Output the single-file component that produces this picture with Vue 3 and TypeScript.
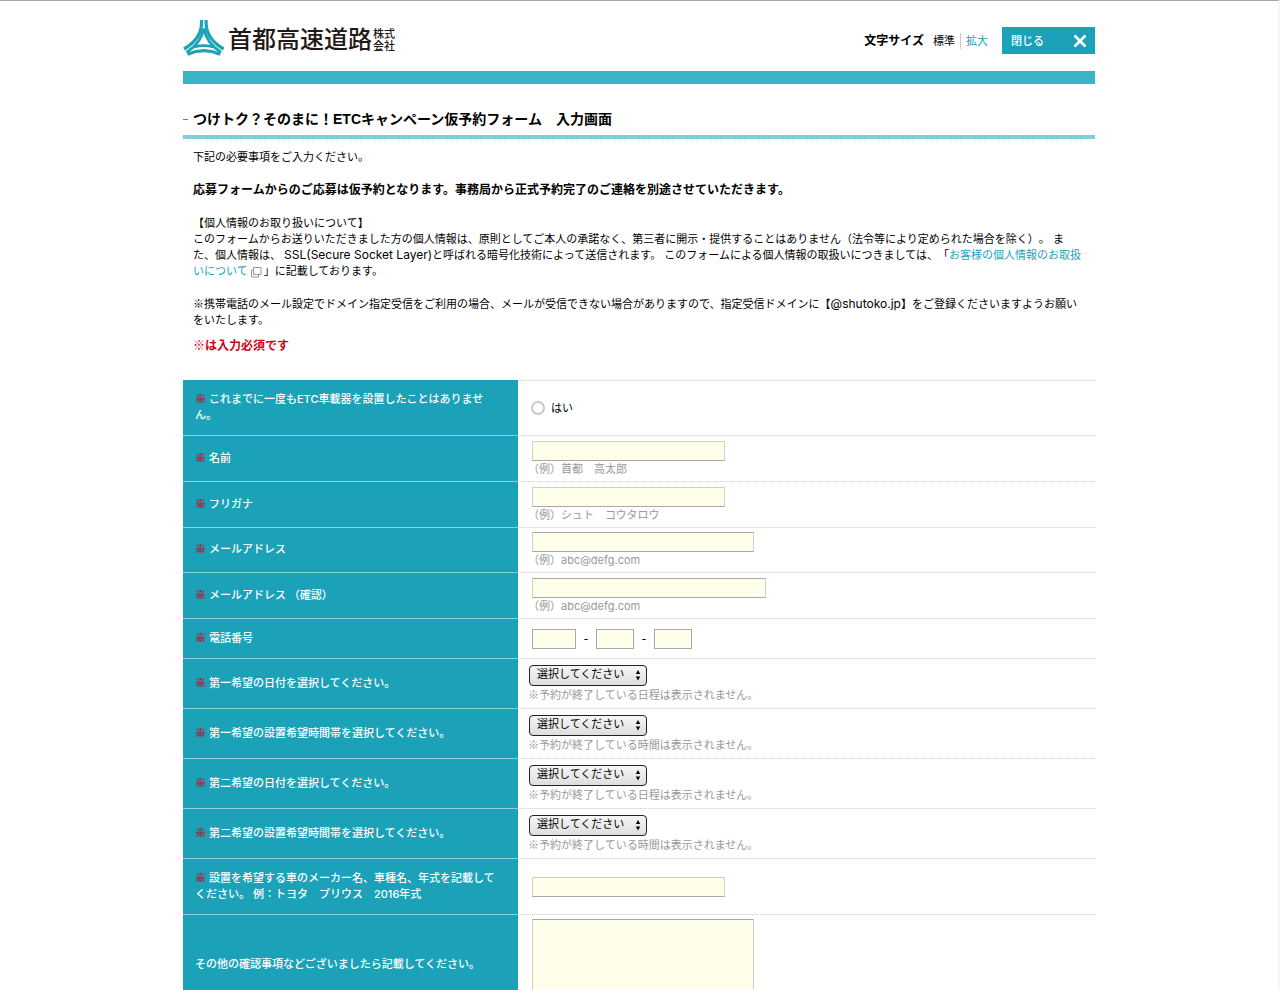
<script setup lang="ts">
interface Row {
  id: string
  label: string
  size: 'choice' | 'text' | 'mail' | 'phone' | 'pick' | 'car' | 'memo'
  required: boolean
  field?: 'name' | 'confirm'
  note?: string
}

const dateNote = '予約が終了している日程は表示されません。'
const timeNote = '予約が終了している時間は表示されません。'

const rows: Row[] = [
  { id: 'first', label: 'これまでに一度もETC車載器を設置したことはありません。', size: 'choice', required: true },
  { id: 'name', label: '名前', size: 'text', required: true, field: 'name', note: '（例）首都　高太郎' },
  { id: 'kana', label: 'フリガナ', size: 'text', required: true, field: 'name', note: '（例）シュト　コウタロウ' },
  { id: 'mail', label: 'メールアドレス', size: 'mail', required: true, note: '（例）abc@defg.com' },
  { id: 'mail2', label: 'メールアドレス （確認）', size: 'text', required: true, field: 'confirm', note: '（例）abc@defg.com' },
  { id: 'phone', label: '電話番号', size: 'phone', required: true },
  { id: 'date1', label: '第一希望の日付を選択してください。', size: 'pick', required: true, note: dateNote },
  { id: 'time1', label: '第一希望の設置希望時間帯を選択してください。', size: 'pick', required: true, note: timeNote },
  { id: 'date2', label: '第二希望の日付を選択してください。', size: 'pick', required: true, note: dateNote },
  { id: 'time2', label: '第二希望の設置希望時間帯を選択してください。', size: 'pick', required: true, note: timeNote },
  { id: 'car', label: '設置を希望する車のメーカー名、車種名、年式を記載してください。 例：トヨタ　プリウス　2016年式', size: 'car', required: true, field: 'name' },
  { id: 'memo', label: 'その他の確認事項などございましたら記載してください。', size: 'memo', required: false },
]
</script>

<template>
  <div class="page">
    <div class="container">
      <header class="header">
        <div class="logo">
          <svg class="mark" viewBox="0 0 42 36" width="42" height="36" aria-hidden="true">
            <g fill="none" stroke="#1ba3b8">
              <g stroke-width="3.200">
                <path d="M18.500 0V3C18.500 14 12 22.500 1 29" />
                <path d="M23.100 0V3C23.100 14 29.600 22.500 40.600 29" />
                <path d="M4.500 34.200C15 29.600 26.600 29.600 37.100 34.200" />
              </g>
              <g stroke-width="2.800">
                <path d="M20.800 8.500C19 18 13.500 26 3.500 32.500" />
                <path d="M20.800 8.500C22.600 18 28.100 26 38.100 32.500" />
                <path d="M11.500 26.800C17.500 25.400 24.100 25.400 30.100 26.800" />
              </g>
            </g>
          </svg>
          <span class="logo-name">首都高速道路</span>
          <span class="logo-sub">株式<br>会社</span>
        </div>
        <div class="tools">
          <strong class="size-title">文字サイズ</strong>
          <button type="button" class="size-button">標準</button>
          <button type="button" class="size-button large">拡大</button>
          <button type="button" class="close">
            閉じる
            <svg viewBox="0 0 14 14" width="14" height="14" aria-hidden="true">
              <path d="M1.500 1.500L12.500 12.500M12.500 1.500L1.500 12.500" stroke="#fff" stroke-width="2.600" />
            </svg>
          </button>
        </div>
      </header>
      <div class="band"></div>

      <h1 class="title"><span class="dash"></span>つけトク？そのまに！ETCキャンペーン仮予約フォーム　入力画面</h1>
      <div class="rule"></div>

      <div class="intro">
        <p>下記の必要事項をご入力ください。</p>
        <p class="strong">応募フォームからのご応募は仮予約となります。事務局から正式予約完了のご連絡を別途させていただきます。</p>
        <p>
          【個人情報のお取り扱いについて】<br>
          このフォームからお送りいただきました方の個人情報は、原則としてご本人の承諾なく、第三者に開示・提供することはありません（法令等により定められた場合を除く）。 ま<br>た、個人情報は、 <span class="latin">SSL(Secure Socket Layer)</span>と呼ばれる暗号化技術によって送信されます。 このフォームによる個人情報の取扱いにつきましては、「<a href="#">お客様の個人情報のお取扱<br>いについて<svg class="popup" viewBox="0 0 12 12" width="12" height="12" aria-hidden="true"><path d="M3.500 1.500H11V8.500H3.500ZM3.500 4H1.500V11H8.500V8.500" fill="none" stroke="#999" /></svg></a>」に記載しております。
        </p>
        <p>
          <span class="kome">※</span>携帯電話のメール設定でドメイン指定受信をご利用の場合、メールが受信できない場合がありますので、指定受信ドメインに【<span class="latin">@shutoko.jp</span>】をご登録くださいますようお願い<br>をいたします。
        </p>
        <p class="strong must">※は入力必須です</p>
      </div>

      <form @submit.prevent>
        <table class="form">
          <tbody>
            <tr v-for="row in rows" :key="row.id" :class="row.size">
              <th scope="row">
                <label :for="row.id"><template v-if="row.required"><span class="kome required">※</span>&nbsp;</template>{{ row.label }}</label>
              </th>
              <td>
                <div v-if="row.size === 'choice'" class="radio">
                  <input :id="row.id" type="radio" name="first">
                  <label :for="row.id">はい</label>
                </div>
                <div v-else-if="row.size === 'phone'" class="numbers">
                  <input :id="row.id" class="box area" type="tel" aria-label="市外局番">
                  <span>-</span>
                  <input class="box part" type="tel" aria-label="市内局番">
                  <span>-</span>
                  <input class="box part" type="tel" aria-label="加入者番号">
                </div>
                <div v-else-if="row.size === 'pick'" class="picker">
                  <select :id="row.id"><option>選択してください</option></select>
                  <svg viewBox="0 0 6 12" width="6" height="12" aria-hidden="true">
                    <path d="M3 1L5.200 5H0.800ZM3 11.500L5.200 7.500H0.800Z" fill="#000" />
                  </svg>
                </div>
                <textarea v-else-if="row.size === 'memo'" :id="row.id" class="box memo-box"></textarea>
                <input v-else :id="row.id" class="box" :class="row.field" type="text">
                <p v-if="row.note" class="note"><span v-if="row.size === 'pick'" class="kome">※</span>{{ row.note }}</p>
              </td>
            </tr>
          </tbody>
        </table>
      </form>
    </div>
  </div>
</template>

<style>
html,
body {
  margin: 0;
  background: #fff;
}
</style>

<style scoped>
.page {
  box-sizing: border-box;
  border-top: 1px solid #a5a5a5;
  border-right: 2px solid #f6f6f6;
  color: #000;
  font: 11px/16px Inter, "Noto Sans CJK JP", sans-serif;
  text-spacing-trim: space-all;
}
.container {
  max-width: 912px;
  margin: 0 auto;
}
.header {
  display: flex;
  justify-content: space-between;
  align-items: flex-start;
  height: 70px;
}
.logo {
  display: flex;
  align-items: flex-start;
  padding-top: 19px;
  color: #231815;
  font-family: "Noto Sans CJK JP", sans-serif;
}
.logo-name {
  margin-left: 3px;
  font-size: 24px;
  line-height: 36px;
  font-weight: 500;
}
.logo-sub {
  margin: 7px 0 0 1px;
  font-size: 11px;
  line-height: 12px;
  font-weight: 500;
}
.tools {
  display: flex;
  align-items: center;
  padding-top: 26px;
}
.size-title {
  margin-right: 4px;
  font-size: 12px;
}
.size-button {
  padding: 0 5px;
  border: 0;
  background: none;
  color: #000;
  font: inherit;
}
.size-button.large {
  margin-right: 9px;
  border-left: 1px solid #ccc;
  color: #1ba3b8;
}
.close {
  display: flex;
  justify-content: space-between;
  align-items: center;
  width: 93px;
  height: 27px;
  padding: 0 8px 0 9px;
  border: 0;
  background: #1ba1b8;
  color: #fff;
  font: inherit;
  font-weight: 500;
}
.band {
  height: 13px;
  background: #3cb3c5;
}
.title {
  display: flex;
  align-items: center;
  gap: 5px;
  margin: 24px 0 5px;
  font-family: "Liberation Sans", "Noto Sans CJK JP", sans-serif;
  font-size: 14px;
  line-height: 22px;
  font-weight: 700;
}
.dash {
  width: 5px;
  height: 1px;
  background: #777;
}
.rule {
  height: 4px;
  background: repeating-linear-gradient(90deg, #6fc6d3 0 1px, #8ad1db 1px 3px);
}
.intro {
  padding: 10px 0 27px 10px;
  white-space: nowrap;
}
.intro p {
  margin: 0 0 17px;
}
.intro .strong {
  font-size: 12px;
  font-weight: 700;
}
.intro .must {
  margin: -8px 0 0;
  color: #d0021b;
  font-family: "Noto Sans CJK JP", sans-serif;
}
.latin {
  font-size: 12px;
  line-height: 1;
}
a {
  color: #1ba3b8;
  text-decoration: none;
}
.popup {
  margin: 0 2px;
  vertical-align: -3px;
}
.kome {
  font-family: "Noto Sans CJK JP", sans-serif;
  line-height: 1;
}
.form {
  width: 100%;
  border-collapse: collapse;
  table-layout: fixed;
}
th,
td {
  box-sizing: border-box;
  padding: 0 10px;
  vertical-align: middle;
  text-align: left;
}
th {
  width: 335px;
  padding: 0 20px 2px 12px;
  border-top: 1px solid #8fd0db;
  background: #1ba1b8;
  color: #fff;
  font-weight: 500;
}
tr:first-child th {
  border-top-color: #1ba1b8;
}
td {
  border-top: 1px dotted #ccc;
}
.required {
  color: #d0021b;
  font-weight: 700;
  text-shadow: 0 0 1px #d0021b;
}
.choice {
  height: 55px;
}
.text {
  height: 46px;
}
.mail {
  height: 45px;
}
.phone {
  height: 40px;
}
.pick {
  height: 50px;
}
.car {
  height: 56px;
}
.memo {
  height: 100px;
}
.radio {
  display: flex;
  align-items: center;
  gap: 6px;
}
.radio input {
  appearance: none;
  width: 14px;
  height: 14px;
  margin: 0 0 0 3px;
  border: 2px solid #c8c8c8;
  border-radius: 50%;
  background: #fff;
}
.box {
  box-sizing: border-box;
  display: block;
  height: 20px;
  margin: 0 0 0 4px;
  padding: 1px 3px;
  border: 1px solid #d0d0c4;
  border-bottom-color: #aaaaa4;
  border-radius: 0;
  background: #fffeea;
  font: inherit;
}
.name {
  width: 193px;
}
.mail .box {
  width: 222px;
}
.confirm {
  width: 234px;
}
.mail .box,
.confirm {
  border-color: #aaaaa4 #d0d0c4;
}
.numbers {
  display: flex;
  align-items: center;
}
.numbers .box {
  border-color: #aaaaa4;
}
.numbers span {
  width: 16px;
  padding-left: 4px;
  box-sizing: border-box;
  text-align: center;
}
.area {
  width: 44px;
}
.part {
  width: 38px;
}
.memo .memo-box {
  width: 222px;
  height: 91px;
  border-color: #aaaaa4 #d0d0c4;
  resize: none;
}
.picker {
  display: grid;
  align-items: center;
  width: 118px;
  margin-left: 1px;
}
.picker > * {
  grid-area: 1 / 1;
}
.picker svg {
  justify-self: end;
  margin-right: 6px;
  pointer-events: none;
}
select {
  appearance: none;
  box-sizing: border-box;
  width: 100%;
  height: 21px;
  margin: 0;
  padding: 0 7px 2px;
  border: 1px solid #222;
  border-radius: 4px;
  background: linear-gradient(#f6f6f6, #dedede);
  color: #000;
  font: inherit;
}
.note {
  margin: 0;
  color: #999;
}
.pick .note {
  margin-top: 1px;
}
</style>
